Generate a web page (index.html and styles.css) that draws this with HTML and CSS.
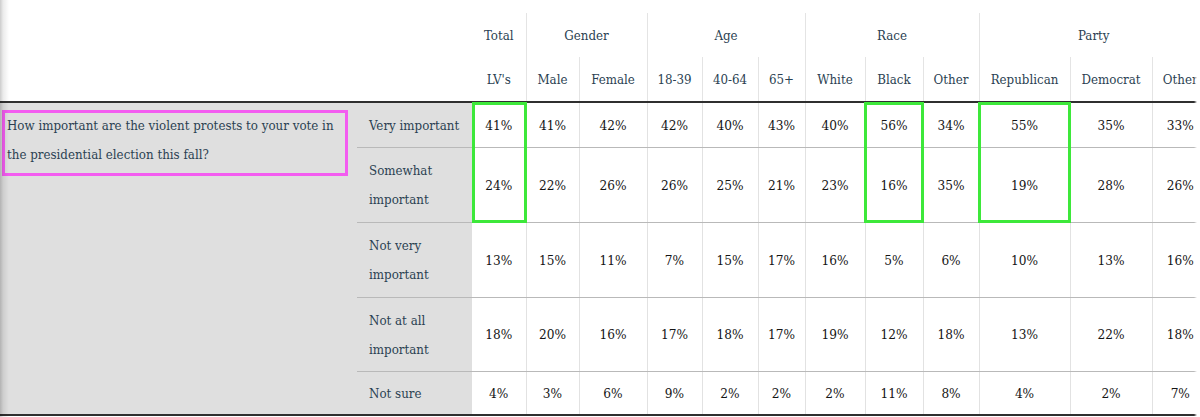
FILE: index.html
```html
<!DOCTYPE html>
<html lang="en">
<head>
<meta charset="utf-8">
<title>Poll crosstab</title>
<link rel="stylesheet" href="styles.css">
</head>
<body>
<div class="frame">
  <table class="xt">
    <colgroup>
      <col class="c-q"><col class="c-a">
      <col class="c-total"><col class="c-male"><col class="c-female">
      <col class="c-a1"><col class="c-a2"><col class="c-a3">
      <col class="c-white"><col class="c-black"><col class="c-rother">
      <col class="c-rep"><col class="c-dem"><col class="c-pother">
    </colgroup>
    <thead>
      <tr class="h1">
        <th></th><th></th>
        <th class="grp first">Total</th>
        <th class="grp sep" colspan="2">Gender</th>
        <th class="grp sep" colspan="3">Age</th>
        <th class="grp sep" colspan="3">Race</th>
        <th class="grp sep" colspan="3">Party</th>
      </tr>
      <tr class="h2">
        <th></th><th></th>
        <th class="sub first">LV's</th>
        <th class="sub sep">Male</th>
        <th class="sub sep">Female</th>
        <th class="sub sep">18-39</th>
        <th class="sub sep">40-64</th>
        <th class="sub sep">65+</th>
        <th class="sub sep">White</th>
        <th class="sub sep">Black</th>
        <th class="sub sep">Other</th>
        <th class="sub sep">Republican</th>
        <th class="sub sep">Democrat</th>
        <th class="sub sep">Other</th>
      </tr>
    </thead>
    <tbody>
      <tr class="r1">
        <td class="q" rowspan="5">How important are the violent protests to your vote in<br>the presidential election this fall?</td>
        <td class="a">Very important</td>
        <td class="n first">41%</td><td class="n">41%</td><td class="n">42%</td><td class="n">42%</td><td class="n">40%</td><td class="n">43%</td><td class="n">40%</td><td class="n">56%</td><td class="n">34%</td><td class="n">55%</td><td class="n">35%</td><td class="n">33%</td>
      </tr>
      <tr class="r2">
        <td class="a">Somewhat<br>important</td>
        <td class="n first">24%</td><td class="n">22%</td><td class="n">26%</td><td class="n">26%</td><td class="n">25%</td><td class="n">21%</td><td class="n">23%</td><td class="n">16%</td><td class="n">35%</td><td class="n">19%</td><td class="n">28%</td><td class="n">26%</td>
      </tr>
      <tr class="r3">
        <td class="a">Not very<br>important</td>
        <td class="n first">13%</td><td class="n">15%</td><td class="n">11%</td><td class="n">7%</td><td class="n">15%</td><td class="n">17%</td><td class="n">16%</td><td class="n">5%</td><td class="n">6%</td><td class="n">10%</td><td class="n">13%</td><td class="n">16%</td>
      </tr>
      <tr class="r4">
        <td class="a">Not at all<br>important</td>
        <td class="n first">18%</td><td class="n">20%</td><td class="n">16%</td><td class="n">17%</td><td class="n">18%</td><td class="n">17%</td><td class="n">19%</td><td class="n">12%</td><td class="n">18%</td><td class="n">13%</td><td class="n">22%</td><td class="n">18%</td>
      </tr>
      <tr class="r5">
        <td class="a">Not sure</td>
        <td class="n first">4%</td><td class="n">3%</td><td class="n">6%</td><td class="n">9%</td><td class="n">2%</td><td class="n">2%</td><td class="n">2%</td><td class="n">11%</td><td class="n">8%</td><td class="n">4%</td><td class="n">2%</td><td class="n">7%</td>
      </tr>
    </tbody>
  </table>
  <div class="mark mark-q"></div>
  <div class="mark mark-total"></div>
  <div class="mark mark-black"></div>
  <div class="mark mark-rep"></div>
  <div class="edge-left"></div>
  <div class="edge-right"></div>
</div>
</body>
</html>
```
FILE: styles.css
```css
html, body {
  margin: 0;
  padding: 0;
  background: #ffffff;
}

.frame {
  position: relative;
  width: 1197px;
  height: 417px;
  overflow: hidden;
  padding-top: 13px;
  box-sizing: border-box;
}

.xt {
  table-layout: fixed;
  width: 1208px;
  border-collapse: collapse;
  font-family: "DejaVu Serif Condensed", "DejaVu Serif", serif;
  font-stretch: semi-condensed;
  font-size: 13.2px;
  color: #2b3f52;
}

.c-q { width: 357px; }
.c-a { width: 115px; }
.c-total { width: 54px; }
.c-male { width: 53px; }
.c-female { width: 68px; }
.c-a1 { width: 55px; }
.c-a2 { width: 56px; }
.c-a3 { width: 47px; }
.c-white { width: 60px; }
.c-black { width: 58px; }
.c-rother { width: 56px; }
.c-rep { width: 91px; }
.c-dem { width: 82px; }
.c-pother { width: 56px; }

.xt th {
  font-weight: normal;
  text-align: center;
  padding: 0;
  white-space: nowrap;
}

.h1 th { height: 44px; }
.h2 th { height: 44px; border-bottom: 2px solid #2f2f2f; }

.sep { border-left: 1px solid #e4e4e4; }

.xt td {
  padding: 0;
  line-height: 29px;
  white-space: nowrap;
}

.q {
  background: #dfdfdf;
  vertical-align: top;
  padding: 8px 0 0 7px !important;
  border-bottom: 2px solid #2f2f2f;
}

.a {
  background: #dfdfdf;
  padding: 0 0 0 12px !important;
  border-bottom: 1px solid #b9b9b9;
}

.n {
  text-align: center;
  color: #151515;
  font-size: 13.5px;
  border-bottom: 1px solid #b9b9b9;
  border-left: 1px solid #e2e2e2;
}

.n.first { border-left: none; }

.r1 td { height: 44px; }
.r2 td { height: 74px; }
.r3 td { height: 74px; }
.r4 td { height: 73px; }
.r5 td { height: 42px; border-bottom: 2px solid #2f2f2f; }

.mark {
  position: absolute;
  box-sizing: border-box;
}

.mark-q {
  left: 2px;
  top: 110px;
  width: 346px;
  height: 66px;
  border: 3px solid #f35cf0;
}

.mark-total {
  left: 472px;
  top: 102px;
  width: 55px;
  height: 121px;
  border: 3px solid #3de83a;
}

.mark-black {
  left: 864px;
  top: 102px;
  width: 60px;
  height: 121px;
  border: 3px solid #3de83a;
}

.mark-rep {
  left: 978px;
  top: 102px;
  width: 93px;
  height: 121px;
  border: 3px solid #3de83a;
}

.edge-left {
  position: absolute;
  left: 0;
  top: 0;
  width: 9px;
  height: 100%;
  background: linear-gradient(to right, rgba(0,0,0,0.2), rgba(0,0,0,0.08) 35%, rgba(0,0,0,0));
}

.edge-right {
  position: absolute;
  right: 0;
  top: 0;
  width: 3px;
  height: 100%;
  background: linear-gradient(to right, rgba(255,255,255,0), #ffffff);
}
```
